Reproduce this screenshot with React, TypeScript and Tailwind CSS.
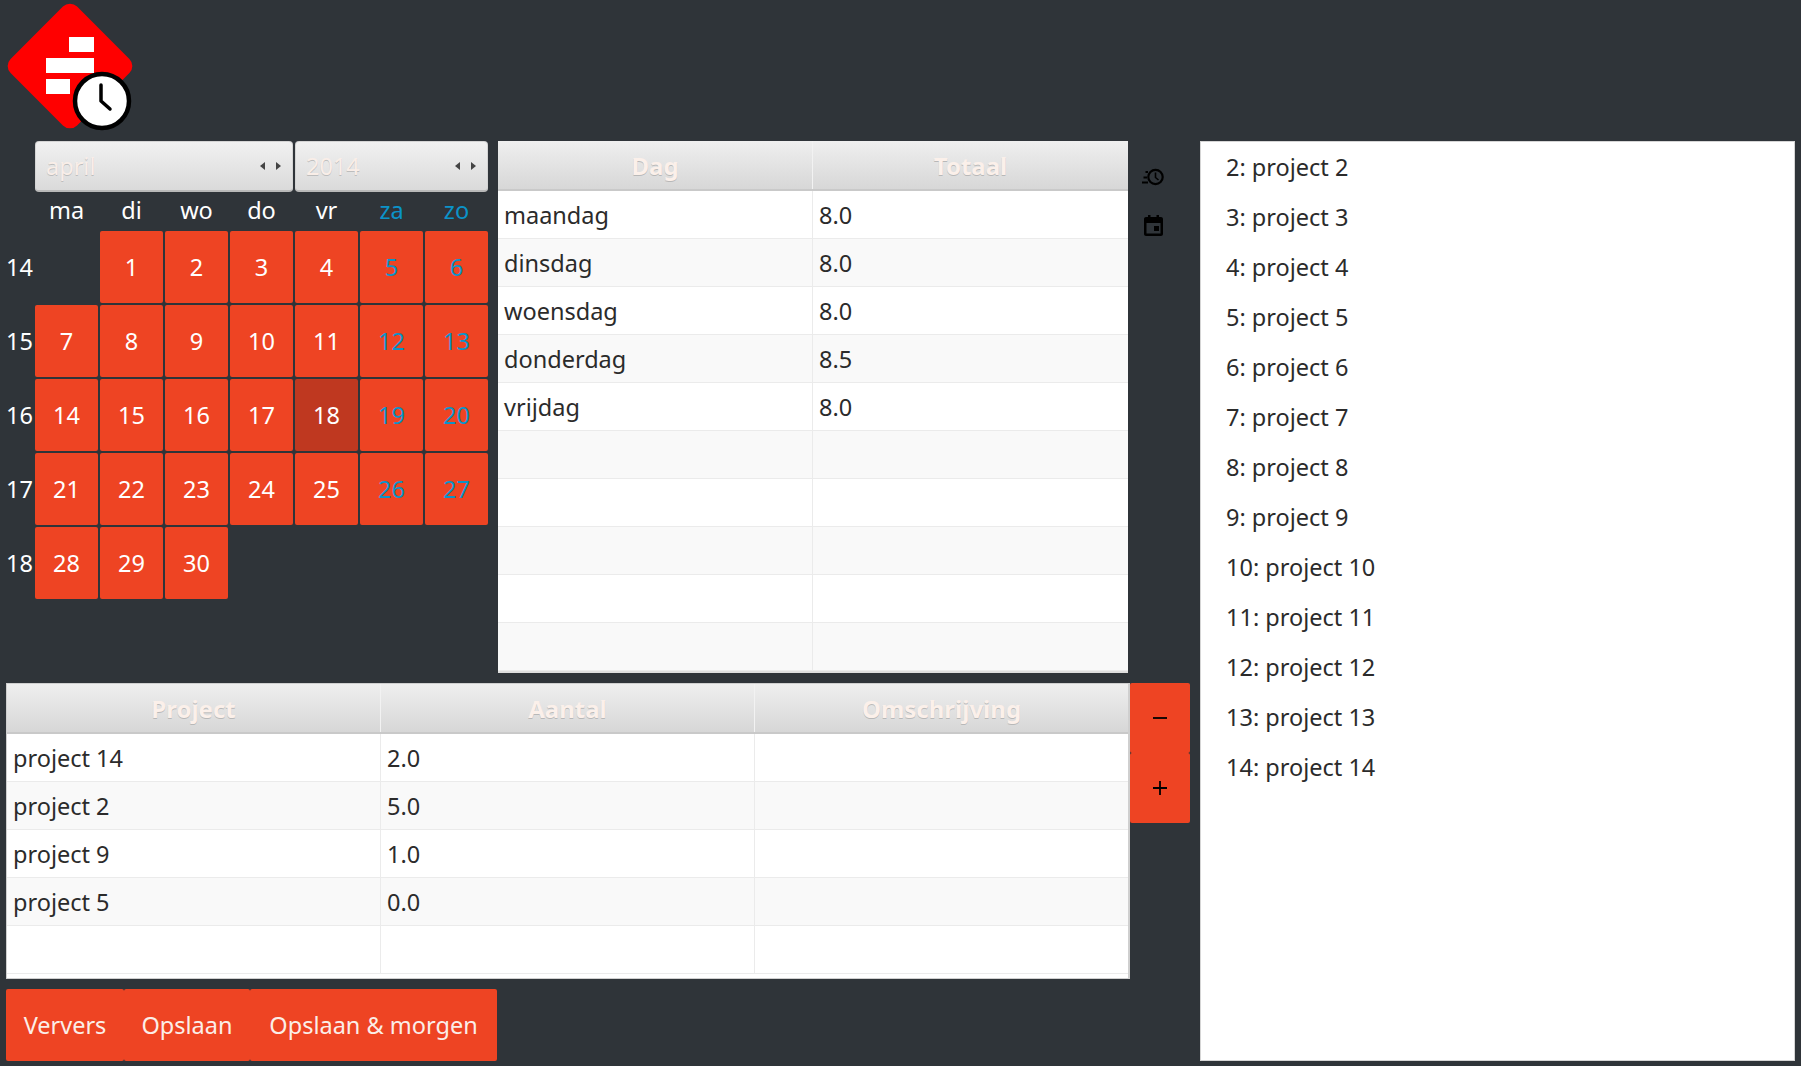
const FONT = "font-['Noto_Sans','Open_Sans',sans-serif]";

function Logo() {
  return (
    <svg width="150" height="141" viewBox="0 0 150 141" className="block">
      <rect x="23" y="19" width="94" height="94" rx="10" transform="rotate(45 70 66)" fill="#ff0000" />
      <rect x="69" y="37" width="25" height="15" fill="#fff" />
      <rect x="46" y="58" width="48" height="15" fill="#fff" />
      <rect x="46" y="79" width="24" height="15" fill="#fff" />
      <circle cx="102" cy="101" r="27" fill="#fff" stroke="#000" strokeWidth="4.5" />
      <path d="M101 85V101L110 109" fill="none" stroke="#000" strokeWidth="3.5" strokeLinecap="round" strokeLinejoin="round" />
    </svg>
  );
}

function Spinner({ label, className }: { label: string; className: string }) {
  return (
    <div className={`h-[51px] rounded-[4px] border border-[#d4d4d4] border-b-2 border-b-[#b9b9b9] bg-gradient-to-b from-[#f1f1f1] to-[#dadada] flex items-center justify-between pl-[10px] pr-[11px] ${className}`}>
      <span className="text-[23.5px] mt-[2px] text-[#f9eee8] [text-shadow:0_1px_0_#bdbdbd]">{label}</span>
      <span className="flex gap-[11px] items-center">
        <svg width="5" height="8" viewBox="0 0 5 8"><path d="M5 0V8L0 4Z" fill="#444" /></svg>
        <svg width="5" height="8" viewBox="0 0 5 8"><path d="M0 0V8L5 4Z" fill="#444" /></svg>
      </span>
    </div>
  );
}

function Calendar() {
  const heads = ["ma", "di", "wo", "do", "vr", "za", "zo"];
  const weeks: [number, (number | null)[]][] = [
    [14, [null, 1, 2, 3, 4, 5, 6]],
    [15, [7, 8, 9, 10, 11, 12, 13]],
    [16, [14, 15, 16, 17, 18, 19, 20]],
    [17, [21, 22, 23, 24, 25, 26, 27]],
    [18, [28, 29, 30, null, null, null, null]],
  ];
  return (
    <div className="w-[488px]">
      <div className="flex gap-[2px] pl-[35px]">
        <Spinner label="april" className="w-[258px]" />
        <Spinner label="2014" className="w-[193px]" />
      </div>
      <div className="grid grid-cols-[33px_repeat(7,63px)] grid-rows-[37px_repeat(5,72px)] gap-[2px] text-[23.5px] text-white">
        <div />
        {heads.map((h, i) => (
          <div key={h} className={`flex items-center justify-center ${i > 4 ? "text-[#0b93c9]" : ""}`}>{h}</div>
        ))}
        {weeks.map(([w, days]) => (
          <div key={w} className="contents">
            <div className="flex items-center justify-end pt-[1px]">{w}</div>
            {days.map((d, i) =>
              d === null ? (
                <div key={i} />
              ) : (
                <div
                  key={i}
                  className={`flex items-center justify-center pt-[1px] rounded-[2px] ${d === 18 ? "bg-[#bf3820]" : "bg-[#ee4423]"} ${i > 4 ? "text-[#0b93c9]" : ""}`}
                >
                  {d}
                </div>
              ),
            )}
          </div>
        ))}
      </div>
    </div>
  );
}

function HeaderCell({ label, className }: { label: string; className: string }) {
  return (
    <div className={`flex items-center justify-center pt-[1px] border-r border-[#f2f2f2] last:border-r-0 font-bold text-[24px] text-[#fbf0ea] [text-shadow:0_1px_0_#b8b8b8] ${className}`}>
      {label}
    </div>
  );
}

function DayTable() {
  const rows = [
    ["maandag", "8.0"],
    ["dinsdag", "8.0"],
    ["woensdag", "8.0"],
    ["donderdag", "8.5"],
    ["vrijdag", "8.0"],
    ["", ""], ["", ""], ["", ""], ["", ""], ["", ""],
  ];
  return (
    <div className="w-[630px] h-[532px] ml-[10px] bg-white border-b-2 border-[#dedede] text-[23.5px] text-[#2b2b2b]">
      <div className="flex h-[50px] bg-gradient-to-b from-[#efefef] to-[#d7d7d7] border-b-2 border-[#c9c9c9]">
        <HeaderCell label="Dag" className="w-[315px]" />
        <HeaderCell label="Totaal" className="flex-1" />
      </div>
      {rows.map((r, i) => (
        <div key={i} className={`flex h-[48px] border-b border-[#ebebeb] ${i % 2 ? "bg-[#f9f9f9]" : "bg-white"}`}>
          <div className="w-[315px] border-r border-[#ebebeb] pl-[6px] pt-[2px] flex items-center">{r[0]}</div>
          <div className="flex-1 pl-[6px] pt-[2px] flex items-center">{r[1]}</div>
        </div>
      ))}
    </div>
  );
}

function SideIcons() {
  return (
    <div className="w-[50px] flex flex-col items-center pt-[26px] gap-[28px]">
      <svg width="24" height="20" viewBox="0 0 24 20" className="block">
        <circle cx="14.5" cy="10" r="7.2" fill="none" stroke="#000" strokeWidth="2.2" />
        <path d="M14.5 5.5V10.5L17.5 13" fill="none" stroke="#000" strokeWidth="1.6" />
        <path d="M4.5 5H7M2.5 10.5H6M1 15.5H7" fill="none" stroke="#000" strokeWidth="1.8" />
      </svg>
      <svg width="19" height="21" viewBox="0 0 19 21" className="block">
        <path d="M4 0H6.5V2H12.5V0H15V2H17C18.1 2 19 2.9 19 4V19C19 20.1 18.1 21 17 21H2C.9 21 0 20.1 0 19V4C0 2.9.9 2 2 2H4ZM2.5 8V18.5H16.5V8Z" fill="#000" fillRule="evenodd" />
        <rect x="10" y="11" width="5" height="5" fill="#000" />
      </svg>
    </div>
  );
}

function ProjectTable() {
  const rows = [
    ["project 14", "2.0"],
    ["project 2", "5.0"],
    ["project 9", "1.0"],
    ["project 5", "0.0"],
    ["", ""],
  ];
  return (
    <div className="w-[1124px] h-[296px] bg-white border border-[#cfcfcf] border-r-2 text-[23.5px] text-[#2b2b2b]">
      <div className="flex h-[50px] bg-gradient-to-b from-[#efefef] to-[#d7d7d7] border-b-2 border-[#c9c9c9]">
        <HeaderCell label="Project" className="w-[374px]" />
        <HeaderCell label="Aantal" className="w-[374px]" />
        <HeaderCell label="Omschrijving" className="flex-1" />
      </div>
      {rows.map((r, i) => (
        <div key={i} className={`flex h-[48px] border-b border-[#ebebeb] ${i % 2 ? "bg-[#f9f9f9]" : "bg-white"}`}>
          <div className="w-[374px] border-r border-[#ebebeb] pl-[6px] pt-[2px] flex items-center">{r[0]}</div>
          <div className="w-[374px] border-r border-[#ebebeb] pl-[6px] pt-[2px] flex items-center">{r[1]}</div>
          <div className="flex-1" />
        </div>
      ))}
    </div>
  );
}

function PlusMinus() {
  return (
    <div className="w-[60px] flex flex-col">
      <div className="h-[70px] rounded-[2px] bg-[#ee4423] flex items-center justify-center">
        <svg width="14" height="14" viewBox="0 0 14 14"><path d="M0 7H14" stroke="#000" strokeWidth="1.8" /></svg>
      </div>
      <div className="h-[70px] rounded-[2px] bg-[#ee4423] flex items-center justify-center">
        <svg width="14" height="14" viewBox="0 0 14 14"><path d="M0 7H14M7 0V14" stroke="#000" strokeWidth="1.8" /></svg>
      </div>
    </div>
  );
}

function ProjectList() {
  const items = [2, 3, 4, 5, 6, 7, 8, 9, 10, 11, 12, 13, 14];
  return (
    <div className="ml-[10px] w-[595px] h-[920px] bg-white border border-[#d5d5d5] pl-[25px] pt-[1px] text-[23.5px] text-[#2b2b2b]">
      {items.map((n) => (
        <div key={n} className="h-[50px] flex items-center">{`${n}: project ${n}`}</div>
      ))}
    </div>
  );
}

export default function App() {
  return (
    <div className={`w-[1801px] h-[1066px] overflow-hidden bg-[#2f3439] ${FONT}`}>
      <div className="h-[141px]"><Logo /></div>
      <div className="flex">
        <div className="w-[1190px]">
          <div className="flex h-[532px]">
            <Calendar />
            <DayTable />
            <SideIcons />
          </div>
          <div className="flex mt-[10px] ml-[6px]">
            <ProjectTable />
            <PlusMinus />
          </div>
          <div className="flex mt-[10px] ml-[6px] w-[491px] h-[72px] text-[23.5px] text-[#fbeee8]">
            <div className="w-[118px] rounded-[2px] bg-[#ee4423] pt-[2px] flex items-center justify-center">Ververs</div>
            <div className="w-[126px] rounded-[2px] bg-[#ee4423] pt-[2px] flex items-center justify-center">Opslaan</div>
            <div className="flex-1 rounded-[2px] bg-[#ee4423] pt-[2px] flex items-center justify-center">Opslaan &amp; morgen</div>
          </div>
        </div>
        <ProjectList />
      </div>
    </div>
  );
}
